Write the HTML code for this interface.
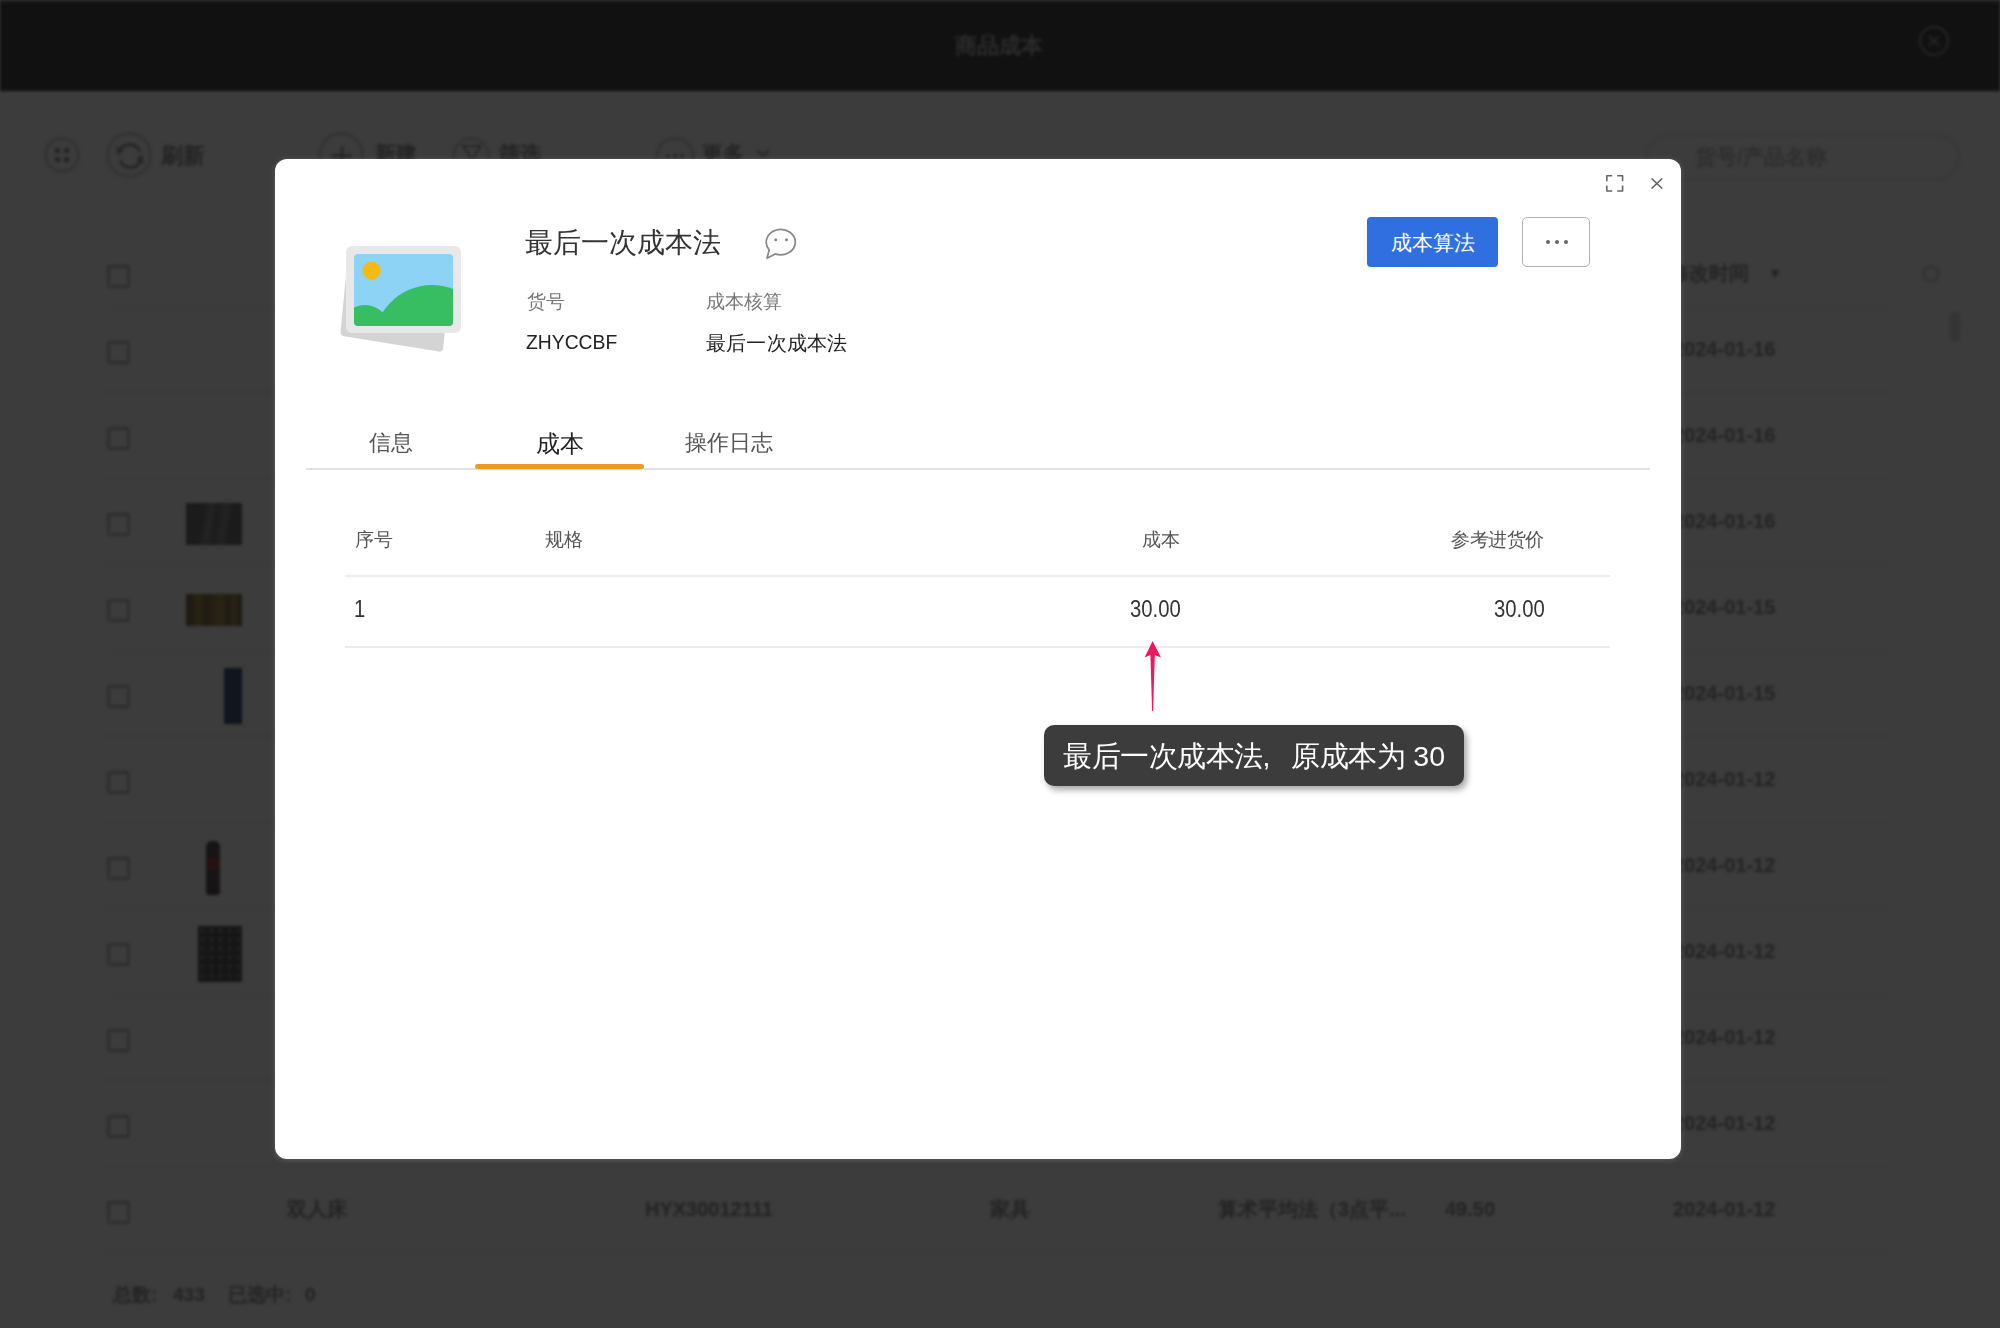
<!DOCTYPE html>
<html><head><meta charset="utf-8">
<style>
*{margin:0;padding:0;box-sizing:border-box;}
html,body{width:2000px;height:1328px;overflow:hidden;background:#3c3c3c;font-family:"Liberation Sans",sans-serif;}
.abs{position:absolute;}
#bg{position:absolute;left:0;top:0;width:2000px;height:1328px;filter:blur(1.4px);}
#topbar{position:absolute;left:0;top:0;width:2000px;height:91px;background:#111;border-top:2px solid #1e1e1e;}
.bgt{position:absolute;color:#232323;font-size:20px;font-weight:bold;white-space:nowrap;line-height:1;}
.cb{position:absolute;left:107px;width:23px;height:23px;border:3px solid #2f2f2f;border-radius:3px;}
.sep{position:absolute;left:105px;width:1785px;height:1px;background:#393939;}
.circ{position:absolute;border:3px solid #333;border-radius:50%;}
#modal{position:absolute;left:275px;top:159px;width:1406px;height:1000px;background:#fff;border-radius:12px;box-shadow:0 1px 5px 1px rgba(255,255,255,0.13);}
i{font-style:normal;display:inline-block;width:1em;text-align:center;}
.t{position:absolute;white-space:nowrap;line-height:1;}
</style></head><body>
<div id="bg">
  <div id="topbar">
    <div class="bgt" style="left:955px;top:33px;font-size:22px;color:#2b2b2b;"><i>商</i><i>品</i><i>成</i><i>本</i></div>
    <div class="circ" style="left:1919px;top:24px;width:30px;height:30px;border-width:2px;border-color:#262626;"></div><svg class="abs" style="left:1928px;top:33px;" width="12" height="12"><path d="M1 1 L11 11 M11 1 L1 11" stroke="#262626" stroke-width="2"/></svg>
  </div>
  <!-- toolbar -->
  <div class="circ" style="left:44px;top:137px;width:36px;height:36px;"></div>
  <div class="circ" style="left:106px;top:132px;width:46px;height:46px;"></div>
  <div class="bgt" style="left:161px;top:145px;font-size:22px;"><i>刷</i><i>新</i></div>
  <div class="circ" style="left:318px;top:132px;width:46px;height:46px;"></div>
  <div class="bgt" style="left:375px;top:143px;font-size:21px;"><i>新</i><i>建</i></div>
  <div class="circ" style="left:452px;top:137px;width:38px;height:38px;"></div>
  <div class="bgt" style="left:499px;top:143px;font-size:21px;"><i>筛</i><i>选</i></div>
  <div class="circ" style="left:655px;top:137px;width:40px;height:40px;"></div>
  <div class="bgt" style="left:702px;top:143px;font-size:21px;"><i>更</i><i>多</i></div>
  <div class="abs" style="left:1645px;top:134px;width:315px;height:46px;border:2px solid #373737;border-radius:23px;"></div>
  <div class="bgt" style="left:1695px;top:146px;font-size:21px;color:#2e2e2e;"><i>货</i><i>号</i>/<i>产</i><i>品</i><i>名</i><i>称</i></div>

  <svg class="abs" style="left:0;top:100px;" width="800" height="100" viewBox="0 100 800 100">
    <g fill="#242424"><rect x="55" y="148" width="5" height="5"/><rect x="64" y="148" width="5" height="5"/><rect x="55" y="157" width="5" height="5"/><rect x="64" y="157" width="5" height="5"/></g>
    <g fill="none" stroke="#262626" stroke-width="3">
      <path d="M120 150 A11 11 0 0 1 140 152"/><path d="M140 162 A11 11 0 0 1 120 160"/>
      <path d="M342 146 V166 M332 156 H352"/>
      <path d="M463 146 H481 L474 156 V165 L470 163 V156 Z" stroke-width="2"/>
      <path d="M666 156 h4 M673 156 h4 M680 156 h4"/>
      <path d="M757 150 L763 156 L769 150" stroke-width="2"/>
    </g>
    <g fill="#262626"><path d="M116 146 L124 150 L118 156 Z"/><path d="M144 164 L136 160 L142 154 Z"/></g>
  </svg>
  <!-- header -->
  <div class="cb" style="top:265px;"></div>
  <div class="bgt" style="left:1669px;top:263px;font-size:20px;"><i>修</i><i>改</i><i>时</i><i>间</i></div><div class="bgt" style="left:1768px;top:266px;font-size:14px;">▼</div>
  <div class="circ" style="left:1922px;top:265px;width:18px;height:18px;"></div>
  <div class="sep" style="top:306px;"></div>
  <div class="abs" style="left:1950px;top:312px;width:10px;height:30px;background:#343434;border-radius:5px;"></div>
  <!-- rows -->
  <div class="cb" style="top:341px;"></div><div class="bgt" style="left:1673px;top:339px;">2024-01-16</div><div class="sep" style="top:392px;"></div>
  <div class="cb" style="top:427px;"></div><div class="bgt" style="left:1673px;top:425px;">2024-01-16</div><div class="sep" style="top:478px;"></div>
  <div class="cb" style="top:513px;"></div><div class="bgt" style="left:1673px;top:511px;">2024-01-16</div><div class="sep" style="top:564px;"></div>
  <div class="cb" style="top:599px;"></div><div class="bgt" style="left:1673px;top:597px;">2024-01-15</div><div class="sep" style="top:650px;"></div>
  <div class="cb" style="top:685px;"></div><div class="bgt" style="left:1673px;top:683px;">2024-01-15</div><div class="sep" style="top:736px;"></div>
  <div class="cb" style="top:771px;"></div><div class="bgt" style="left:1673px;top:769px;">2024-01-12</div><div class="sep" style="top:822px;"></div>
  <div class="cb" style="top:857px;"></div><div class="bgt" style="left:1673px;top:855px;">2024-01-12</div><div class="sep" style="top:908px;"></div>
  <div class="cb" style="top:943px;"></div><div class="bgt" style="left:1673px;top:941px;">2024-01-12</div><div class="sep" style="top:994px;"></div>
  <div class="cb" style="top:1029px;"></div><div class="bgt" style="left:1673px;top:1027px;">2024-01-12</div><div class="sep" style="top:1080px;"></div>
  <div class="cb" style="top:1115px;"></div><div class="bgt" style="left:1673px;top:1113px;">2024-01-12</div><div class="sep" style="top:1166px;"></div>
  <div class="cb" style="top:1201px;"></div>
  <div class="bgt" style="left:287px;top:1199px;"><i>双</i><i>人</i><i>床</i></div>
  <div class="bgt" style="left:645px;top:1199px;">HYX30012111</div>
  <div class="bgt" style="left:990px;top:1199px;"><i>家</i><i>具</i></div>
  <div class="bgt" style="left:1218px;top:1199px;"><i>算</i><i>术</i><i>平</i><i>均</i><i>法</i><i>（</i>3<i>点</i><i>平</i>...</div>
  <div class="bgt" style="left:1445px;top:1199px;">49.50</div>
  <div class="bgt" style="left:1673px;top:1199px;">2024-01-12</div>
  <div class="sep" style="top:1252px;"></div>
  <div class="bgt" style="left:113px;top:1285px;font-size:19px;"><i>总</i><i>数</i>:</div><div class="bgt" style="left:173px;top:1285px;font-size:19px;">433</div><div class="bgt" style="left:228px;top:1285px;font-size:19px;"><i>已</i><i>选</i><i>中</i>:</div><div class="bgt" style="left:305px;top:1285px;font-size:19px;">0</div>
  <!-- thumbnails -->
  <div class="abs" style="left:186px;top:503px;width:56px;height:42px;background:#1b1b1b;background-image:linear-gradient(100deg,transparent 30%,#242424 42%,transparent 52%,#232323 66%,transparent 76%);"></div>
  <div class="abs" style="left:186px;top:594px;width:56px;height:32px;background:#1f1b14;background-image:linear-gradient(90deg,transparent 10%,#2b2414 22%,transparent 35%,#2b2414 62%,transparent 75%,#2b2414 86%,transparent 95%);"></div>
  <div class="abs" style="left:224px;top:668px;width:18px;height:56px;background:#10151e;"></div>
  <div class="abs" style="left:206px;top:841px;width:14px;height:54px;background:#161414;border-radius:6px 6px 3px 3px;"></div><div class="abs" style="left:206px;top:858px;width:14px;height:12px;background:#241313;"></div>
  <div class="abs" style="left:198px;top:926px;width:44px;height:56px;background:#161616;background-image:radial-gradient(circle,#1f1f1f 2px,transparent 2.5px);background-size:9px 9px;"></div>
</div>

<div id="modal">
  <!-- image placeholder icon -->
  <svg class="abs" style="left:55px;top:71px;" width="140" height="130" viewBox="0 0 140 130">
    <defs><clipPath id="ci"><rect x="24" y="24" width="99" height="72" rx="4"/></clipPath></defs>
    <path d="M17.5 30 L10.6 101.5 Q10.2 105.6 14.2 106.2 L108.8 121.6 Q112.8 122.2 113.2 118.2 L121 40 Z" fill="#d4d4d4"/>
    <rect x="16" y="16" width="115" height="87" rx="6" fill="#e8e8e8"/>
    <rect x="24" y="24" width="99" height="72" rx="4" fill="#8dd3f6"/>
    <circle cx="41.6" cy="40.6" r="9.2" fill="#f5bb12"/>
    <g clip-path="url(#ci)" fill="#37bd62">
      <circle cx="35" cy="100" r="25"/>
      <ellipse cx="102" cy="118" rx="60" ry="63"/>
    </g>
  </svg>
  <div class="t" style="left:250px;top:70px;font-size:28px;color:#333;"><i>最</i><i>后</i><i>一</i><i>次</i><i>成</i><i>本</i><i>法</i></div>
  <svg class="abs" style="left:489px;top:68px;" width="36" height="36" viewBox="0 0 36 36">
    <path d="M5.2 22.8 A14.5 12.7 0 1 1 11.3 26.9 L3 31.3 Z" fill="none" stroke="#888" stroke-width="1.7" stroke-linejoin="round"/>
    <circle cx="11.7" cy="12.7" r="1.5" fill="#888"/><circle cx="22.5" cy="12.7" r="1.5" fill="#888"/>
  </svg>
  <div class="t" style="left:252px;top:133px;font-size:19px;color:#777;"><i>货</i><i>号</i></div>
  <div class="t" style="left:431px;top:133px;font-size:19px;color:#777;"><i>成</i><i>本</i><i>核</i><i>算</i></div>
  <div class="t" style="left:251px;top:172px;font-size:21px;color:#222;transform:scaleX(0.92);transform-origin:0 0;">ZHYCCBF</div>
  <div class="t" style="left:431px;top:174px;font-size:20.2px;color:#222;"><i>最</i><i>后</i><i>一</i><i>次</i><i>成</i><i>本</i><i>法</i></div>

  <!-- buttons -->
  <div class="abs" style="left:1092px;top:58px;width:131px;height:50px;background:#2f6fe0;border-radius:4px;color:#fff;font-size:21px;line-height:52px;text-align:center;"><i>成</i><i>本</i><i>算</i><i>法</i></div>
  <div class="abs" style="left:1247px;top:58px;width:68px;height:50px;border:1.8px solid #b3b3b3;border-radius:5px;"></div>
  <div class="abs" style="left:1271px;top:81px;width:4px;height:4px;border-radius:50%;background:#666;"></div>
  <div class="abs" style="left:1280px;top:81px;width:4px;height:4px;border-radius:50%;background:#666;"></div>
  <div class="abs" style="left:1289px;top:81px;width:4px;height:4px;border-radius:50%;background:#666;"></div>

  <!-- expand / close -->
  <svg class="abs" style="left:1331px;top:16px;" width="18" height="17" viewBox="0 0 18 17">
    <path d="M0.8 6.2 V0.8 H6.2 M11.2 0.8 H16.6 V6.2 M16.6 10.6 V16 H11.2 M6.2 16 H0.8 V10.6" fill="none" stroke="#666" stroke-width="1.6" stroke-linejoin="round"/>
  </svg>
  <svg class="abs" style="left:1376px;top:19px;" width="12" height="11" viewBox="0 0 12 11">
    <path d="M0.6 0.4 L11.2 10.6 M11.2 0.4 L0.6 10.6" stroke="#666" stroke-width="1.5"/>
  </svg>

  <!-- tabs -->
  <div class="t" style="left:94px;top:273px;font-size:22px;color:#555;"><i>信</i><i>息</i></div>
  <div class="t" style="left:261px;top:274px;font-size:23.5px;color:#222;"><i>成</i><i>本</i></div>
  <div class="t" style="left:410px;top:273px;font-size:22px;color:#555;"><i>操</i><i>作</i><i>日</i><i>志</i></div>
  <div class="abs" style="left:31px;top:309px;width:1344px;height:2px;background:#e2e2e2;"></div>
  <div class="abs" style="left:200px;top:305px;width:169px;height:5px;background:#ef9a20;border-radius:3px;"></div>

  <!-- table -->
  <div class="t" style="left:80px;top:372px;font-size:18.6px;color:#555;"><i>序</i><i>号</i></div>
  <div class="t" style="left:270px;top:372px;font-size:18.6px;color:#555;"><i>规</i><i>格</i></div>
  <div class="t" style="left:867px;top:372px;font-size:18.6px;color:#555;"><i>成</i><i>本</i></div>
  <div class="t" style="left:1176px;top:372px;font-size:18.6px;color:#555;"><i>参</i><i>考</i><i>进</i><i>货</i><i>价</i></div>
  <div class="abs" style="left:70px;top:416px;width:1265px;height:2px;background:#ececec;"></div>
  <div class="t" style="left:79px;top:439px;font-size:23px;color:#333;transform:scaleX(0.88);transform-origin:0 0;">1</div>
  <div class="t" style="left:855px;top:439px;font-size:23px;color:#333;transform:scaleX(0.88);transform-origin:0 0;">30.00</div>
  <div class="t" style="left:1219px;top:439px;font-size:23px;color:#333;transform:scaleX(0.88);transform-origin:0 0;">30.00</div>
  <div class="abs" style="left:70px;top:487px;width:1265px;height:2px;background:#ececec;"></div>

  <!-- annotation arrow -->
  <svg class="abs" style="left:860px;top:478px;" width="40" height="80" viewBox="0 0 40 80">
    <path d="M17.6 4 L26 20.5 L19.8 18 L18.1 74 L17.1 74 L15.4 18 L9.6 20.5 Z" fill="#ec1a5c"/>
  </svg>
  <!-- tooltip -->
  <div class="abs" style="left:769px;top:566px;width:420px;height:61px;background:#3c3c3c;border-radius:10px;box-shadow:3px 4px 6px rgba(0,0,0,0.35);"></div>
  <div class="t" style="left:788px;top:583px;font-size:28.5px;color:#fff;"><i>最</i><i>后</i><i>一</i><i>次</i><i>成</i><i>本</i><i>法</i><span style="margin-right:21px">,</span><i>原</i><i>成</i><i>本</i><i>为</i> 30</div>
</div>
</body></html>
